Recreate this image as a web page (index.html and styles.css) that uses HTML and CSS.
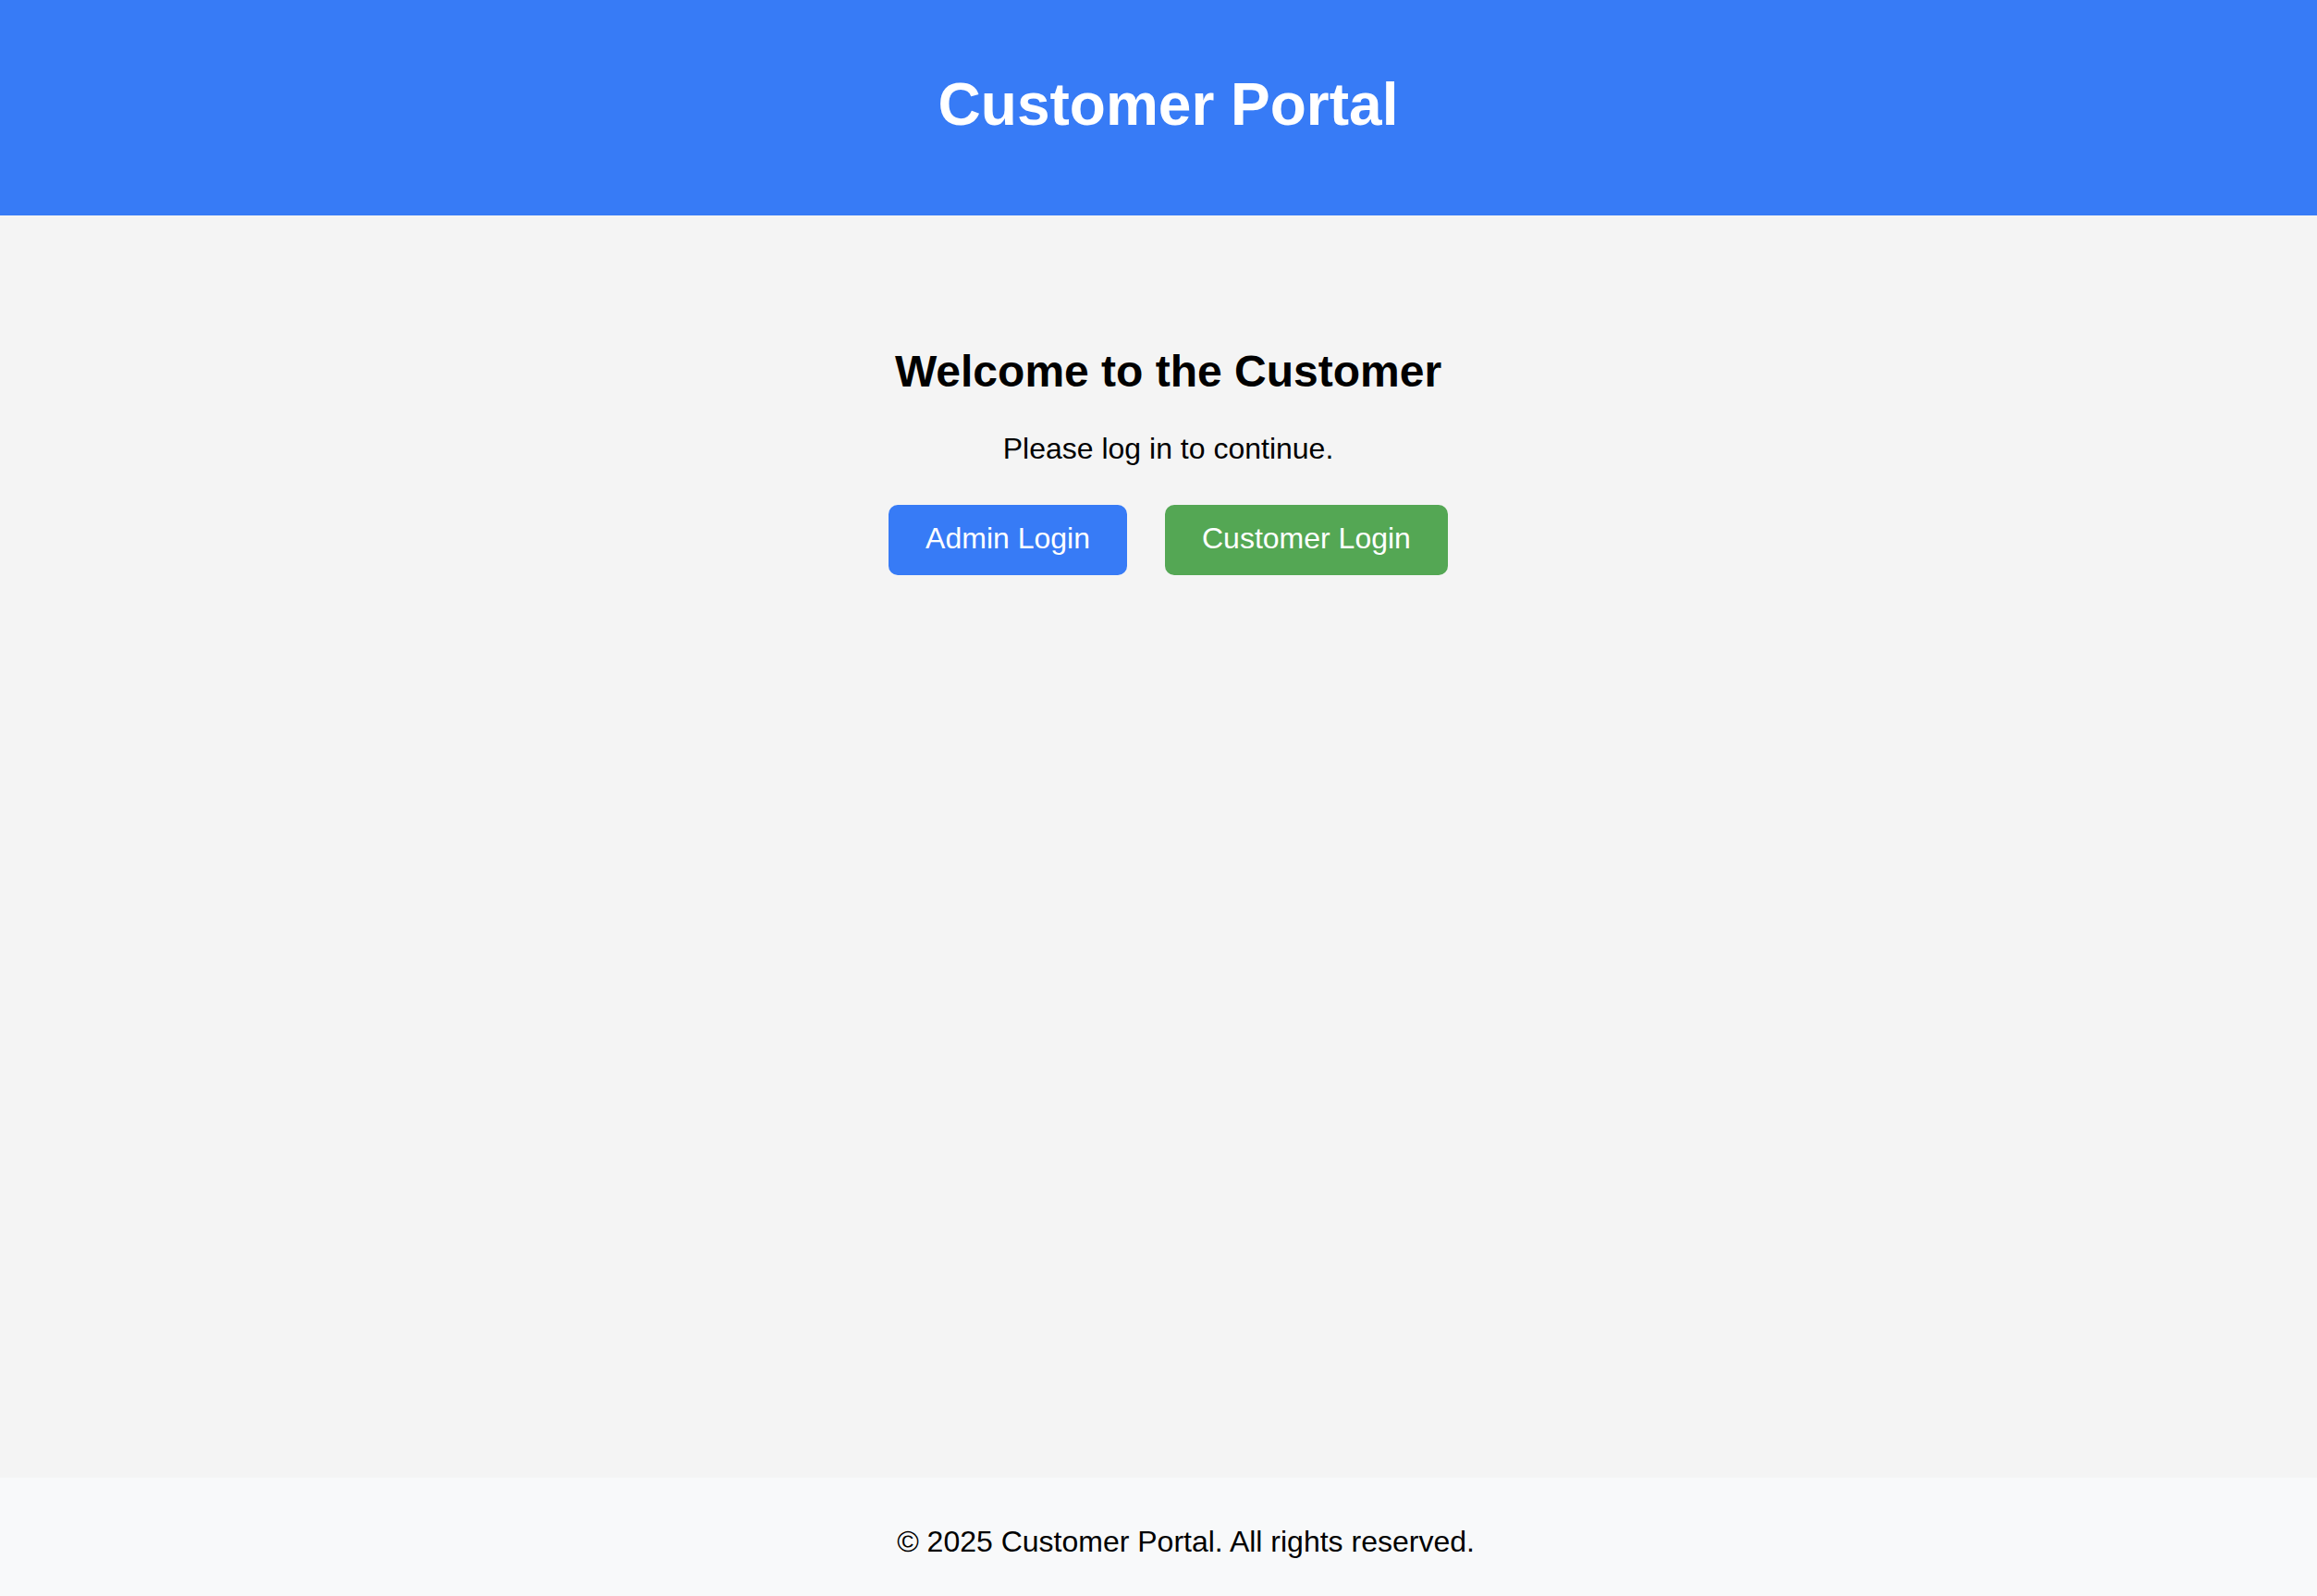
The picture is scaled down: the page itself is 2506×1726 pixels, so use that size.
FILE: index.html
```html
<!DOCTYPE html>
<html lang="en">
<head>
<meta charset="utf-8">
<title>Customer Portal</title>
<link rel="stylesheet" href="styles.css">
</head>
<body>
<header class="site-header">
  <h1 class="site-title">Customer Portal</h1>
</header>
<main class="main">
  <h2 class="welcome">Welcome to the Customer</h2>
  <p class="lead">Please log in to continue.</p>
  <div class="actions">
    <a class="btn btn-admin" href="#">Admin Login</a>
    <a class="btn btn-customer" href="#">Customer Login</a>
  </div>
</main>
<footer class="site-footer">
  <p class="copy">© 2025 Customer Portal. All rights reserved.</p>
</footer>
</body>
</html>
```

FILE: styles.css
```css
html, body {
  margin: 0;
  padding: 0;
}
body {
  font-family: "Liberation Sans", Arial, sans-serif;
  font-size: 32px;
  color: #000;
  background: #f4f4f4;
  min-height: 100vh;
  display: flex;
  flex-direction: column;
}
.site-header {
  background: #377bf6;
  color: #fff;
  height: 233px;
  box-sizing: border-box;
  padding: 76px 0 0 21px;
  text-align: center;
}
.site-title {
  margin: 0;
  font-size: 64px;
  font-weight: bold;
  line-height: 74px;
}
.main {
  flex: 1;
  display: flex;
  flex-direction: column;
  align-items: center;
  padding: 141px 0 0 21px;
}
.welcome {
  margin: 0;
  font-size: 48px;
  font-weight: bold;
  line-height: 55px;
}
.lead {
  margin: 38px 0 0;
  line-height: 37px;
}
.actions {
  margin-top: 42px;
  display: flex;
  gap: 41px;
}
.btn {
  display: block;
  color: #fff;
  text-decoration: none;
  padding: 18px 40px 22px;
  line-height: 36px;
  border-radius: 10px;
  font-size: 32px;
}
.btn-admin {
  background: #377bf6;
}
.btn-customer {
  background: #54a754;
}
.site-footer {
  background: #f8f9fa;
  height: 128px;
  box-sizing: border-box;
  padding: 51px 0 0 59px;
  text-align: center;
}
.copy {
  margin: 0;
  line-height: 37px;
}
```
